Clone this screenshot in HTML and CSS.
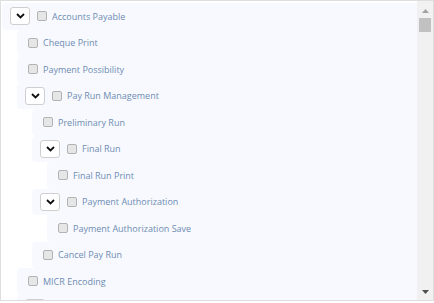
FILE: index.html
```html
<!DOCTYPE html>
<html>
<head>
<meta charset="utf-8">
<link rel="stylesheet" href="styles.css">
</head>
<body>
<div class="frame">
  <div class="viewport">
    <ul class="root">
      <li>
        <div class="row"><span class="toggle"><svg width="9" height="6" viewBox="0 0 9 6"><path d="M1 1 L4.5 4.5 L8 1" fill="none" stroke="#111" stroke-width="1.8"/></svg></span><span class="cb"></span><span class="label">Accounts Payable</span></div>
        <ul class="children">
          <li><div class="row leaf"><span class="cb"></span><span class="label">Cheque Print</span></div></li>
          <li><div class="row leaf"><span class="cb"></span><span class="label">Payment Possibility</span></div></li>
          <li>
            <div class="row"><span class="toggle"><svg width="9" height="6" viewBox="0 0 9 6"><path d="M1 1 L4.5 4.5 L8 1" fill="none" stroke="#111" stroke-width="1.8"/></svg></span><span class="cb"></span><span class="label">Pay Run Management</span></div>
            <ul class="children">
              <li><div class="row leaf"><span class="cb"></span><span class="label">Preliminary Run</span></div></li>
              <li>
                <div class="row"><span class="toggle"><svg width="9" height="6" viewBox="0 0 9 6"><path d="M1 1 L4.5 4.5 L8 1" fill="none" stroke="#111" stroke-width="1.8"/></svg></span><span class="cb"></span><span class="label">Final Run</span></div>
                <ul class="children">
                  <li><div class="row leaf"><span class="cb"></span><span class="label">Final Run Print</span></div></li>
                </ul>
              </li>
              <li>
                <div class="row"><span class="toggle"><svg width="9" height="6" viewBox="0 0 9 6"><path d="M1 1 L4.5 4.5 L8 1" fill="none" stroke="#111" stroke-width="1.8"/></svg></span><span class="cb"></span><span class="label">Payment Authorization</span></div>
                <ul class="children">
                  <li><div class="row leaf"><span class="cb"></span><span class="label">Payment Authorization Save</span></div></li>
                </ul>
              </li>
              <li><div class="row leaf"><span class="cb"></span><span class="label">Cancel Pay Run</span></div></li>
            </ul>
          </li>
          <li><div class="row leaf"><span class="cb"></span><span class="label">MICR Encoding</span></div></li>
          <li>
            <div class="row"><span class="toggle"><svg width="9" height="6" viewBox="0 0 9 6"><path d="M1 1 L4.5 4.5 L8 1" fill="none" stroke="#111" stroke-width="1.8"/></svg></span><span class="cb"></span></div>
          </li>
        </ul>
      </li>
    </ul>
  </div>
  <div class="scrollbar">
    <div class="sb-btn up"><svg width="7" height="4" viewBox="0 0 7 4"><polygon points="0,4 3.5,0 7,4" fill="#a3a3a3"/></svg></div>
    <div class="sb-track"><div class="sb-thumb"></div></div>
    <div class="sb-btn down"><svg width="7" height="4" viewBox="0 0 7 4"><polygon points="0,0 7,0 3.5,4" fill="#505050"/></svg></div>
  </div>
</div>
</body>
</html>
```
FILE: styles.css
```css
html, body {
  margin: 0;
  padding: 0;
  background: #fff;
}
.frame {
  display: flex;
  height: 301px;
  box-sizing: border-box;
  border: 1px solid #dedede;
  background: #fff;
  font-family: "Open Sans", sans-serif;
}
.viewport {
  flex: 1;
  overflow: hidden;
}
.scrollbar {
  width: 16px;
  flex: none;
  display: flex;
  flex-direction: column;
  background: #f1f1f1;
}
.sb-btn {
  height: 16px;
  flex: none;
  display: flex;
  justify-content: center;
  box-sizing: border-box;
  align-items: flex-start;
}
.sb-btn.up {
  padding-top: 8px;
}
.sb-btn.down {
  padding-top: 6px;
}
.sb-btn svg {
  display: block;
}
.sb-track {
  flex: 1;
  padding: 1px 2px 0;
}
.sb-thumb {
  height: 14px;
  background: #c1c1c1;
}
ul {
  list-style: none;
  margin: 0;
  padding: 0;
}
.root {
  padding: 2px 0 0 1px;
}
.children {
  margin-left: 15px;
}
.row {
  display: flex;
  align-items: center;
  height: 26.5px;
  padding-left: 8px;
  background: rgba(40, 100, 230, 0.04);
  border-radius: 4px 0 0 4px;
}
.row.leaf {
  padding-left: 11px;
}
.toggle {
  width: 20px;
  height: 18px;
  box-sizing: border-box;
  border: 1px solid #cfcfcf;
  border-radius: 3px;
  background: #fff;
  margin-right: 7px;
  display: flex;
  align-items: center;
  justify-content: center;
}
.cb {
  width: 10px;
  height: 10px;
  box-sizing: border-box;
  border: 1px solid #b3b3b3;
  border-radius: 2px;
  background: #e6e6e6;
  margin-right: 5px;
}
.label {
  font-size: 9px;
  color: #6f8cb2;
  white-space: nowrap;
}
```
